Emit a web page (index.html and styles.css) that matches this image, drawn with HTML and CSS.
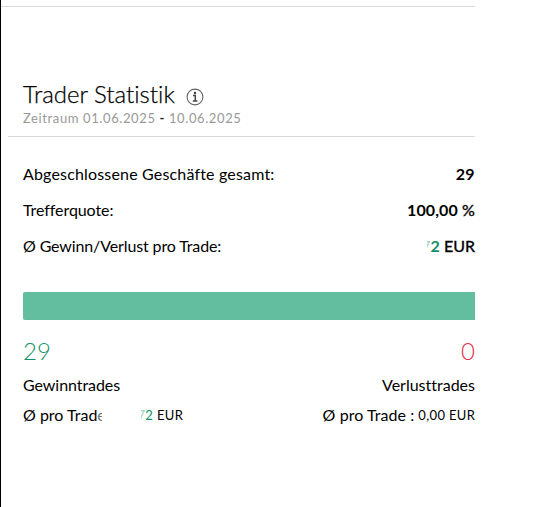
FILE: index.html
```html
<!DOCTYPE html>
<html lang="de">
<head>
<meta charset="utf-8">
<title>Trader Statistik</title>
<link rel="stylesheet" href="styles.css">
</head>
<body>
<main class="panel">
  <hr class="rule rule-top">
  <header class="head">
    <h1 class="title"><span class="title-text">Trader Statistik</span>
      <svg class="info" viewBox="0 0 18 18" width="18" height="18"><circle cx="9" cy="9" r="7.9" fill="none" stroke="#666" stroke-width="1.1"/><circle cx="9" cy="5" r="1.25" fill="#444"/><path d="M7 7.6h2.3v5M6.8 12.9h4.6" fill="none" stroke="#444" stroke-width="1.5"/></svg>
    </h1>
    <p class="period"><span class="period-text">Zeitraum 01.06.2025 <b class="dash">-</b> 10.06.2025</span></p>
  </header>
  <hr class="rule rule-head">
  <section class="stats">
    <div class="row"><span class="l1">Abgeschlossene Geschäfte gesamt:</span><b class="v1">29</b></div>
    <div class="row"><span class="l2">Trefferquote:</span><span class="v2"><b>100,00</b> <span class="unit">%</span></span></div>
    <div class="row"><span class="l3">Ø Gewinn/Verlust pro Trade:</span><span class="v3"><span class="cut">7</span><b class="win">2</b> <span class="unit">EUR</span></span></div>
  </section>
  <div class="bar"></div>
  <section class="split">
    <div class="side">
      <div class="count win">29</div>
      <div class="name n1">Gewinntrades</div>
      <div class="avg"><span class="a1">Ø pro Trad<span class="fade">e</span></span><span class="small amount"><span class="cut">7</span><span class="win">2</span> EUR</span></div>
    </div>
    <div class="side right">
      <div class="count loss">0</div>
      <div class="name n2">Verlusttrades</div>
      <div class="avg"><span class="a2">Ø pro Trade :</span><span class="small s2">0,00 EUR</span></div>
    </div>
  </section>
</main>
</body>
</html>
```
FILE: styles.css
```css
* { box-sizing: border-box; }
body { margin: 0; background: #fff; color: #000; font: 16px/20px Lato, "Open Sans", sans-serif; font-variant-ligatures: none; white-space: nowrap; overflow: hidden; }
.panel { height: 507px; width: 475px; border-left: 1px solid #000; padding-top: 6px; }
.rule { height: 1px; border: 0; background: #d9d9d9; margin: 0; }
.head { padding: 72px 0 0 22px; height: 129px; }
.title { margin: 0; font-size: 24px; line-height: 30px; font-weight: 300; display: flex; }
.title-text { letter-spacing: 0; -webkit-text-stroke: .25px #000; }
.info { margin: 9px 0 0 11px; }
.period { margin: 0; font-size: 13px; line-height: 18px; color: #999; }
.period-text { letter-spacing: .61px; }
.dash { color: #222; }
.rule-head { margin-left: 7px; }
.stats { padding: 19px 0 0 22px; }
.row { display: flex; justify-content: space-between; height: 36px; line-height: 36px; }
.l1 { letter-spacing: .17px; }
.l2 { letter-spacing: -.08px; }
.l3 { letter-spacing: -.13px; }
.v1 { letter-spacing: .4px; }
.v2 { letter-spacing: .1px; }
.unit { -webkit-text-stroke: .35px #000; }
.cut { display: inline-block; width: 4px; overflow: hidden; direction: rtl; color: #9fd6c2; vertical-align: bottom; }
.win { color: #148f68; }
.loss { color: #e52b50; }
.bar { height: 28px; margin: 28px 0 0 22px; border-radius: 2px 0 0 2px; background: #63bd9f; }
.split { display: flex; justify-content: space-between; padding: 16px 0 0 22px; }
.right { text-align: right; }
.count { font-size: 24px; line-height: 30px; font-weight: 300; }
.name { margin-top: 9px; }
.n1 { letter-spacing: -.06px; }
.avg { display: flex; justify-content: flex-start; margin-top: 10px; }
.right .avg { justify-content: flex-end; }
.fade { display: inline-block; width: 5px; overflow: hidden; vertical-align: bottom; color: #777; }
.small { font-size: 13px; line-height: 21px; letter-spacing: .36px; }
.amount { margin-left: 39px; }
.a2 { letter-spacing: .06px; }
.s2 { margin-left: 4px; margin-right: -.3px; }
```
